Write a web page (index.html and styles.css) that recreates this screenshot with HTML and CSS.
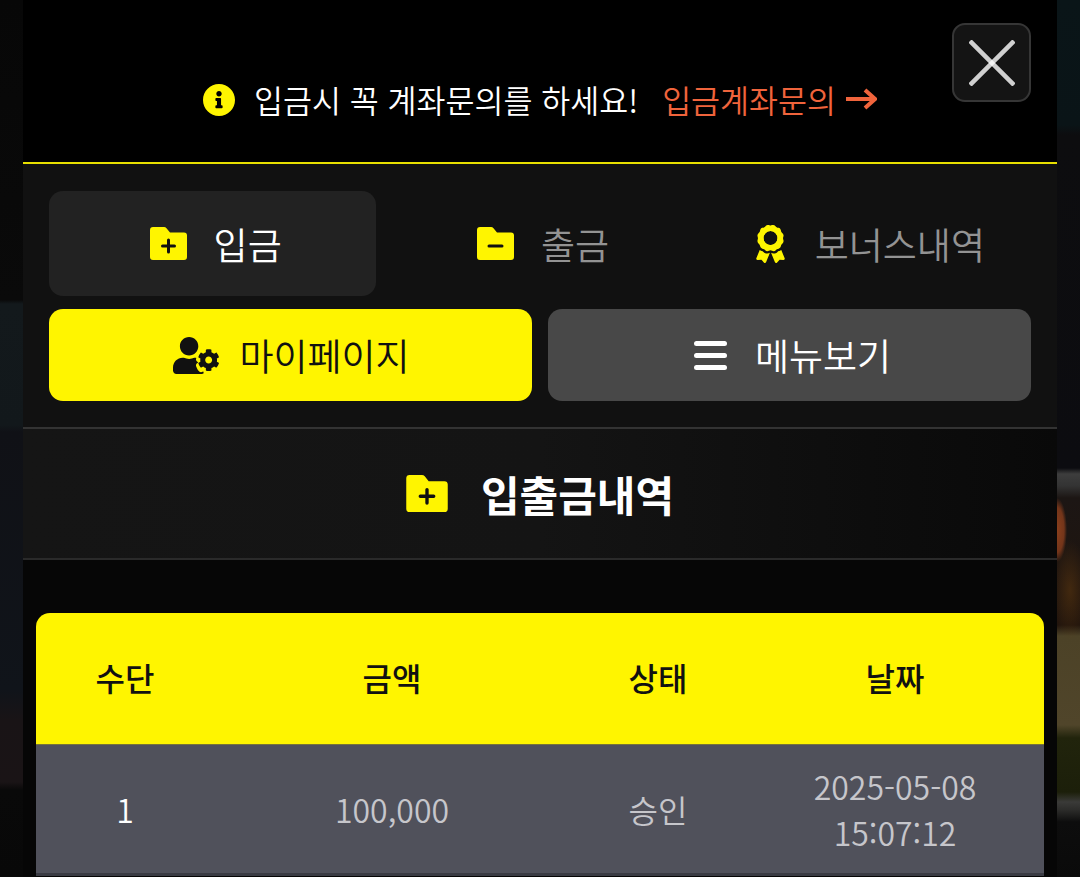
FILE: index.html
```html
<!DOCTYPE html>
<html lang="ko">
<head>
    <meta charset="UTF-8">
    <meta name="viewport" content="width=device-width, initial-scale=1.0">
    <title>입출금내역</title>
    <link rel="stylesheet" href="styles.css">
</head>
<body>
    <div class="modal">
        <button class="close-button" aria-label="닫기">
            <svg viewBox="0 0 46 46" width="46" height="46">
                <path d="M1 1 L45 45" />
                <path d="M45 1 L1 45" />
            </svg>
        </button>

        <div class="notice">
            <svg class="notice-icon" viewBox="8 8 496 496">
                <path d="M256 8C119.043 8 8 119.083 8 256c0 136.997 111.043 248 248 248s248-111.003 248-248C504 119.083 392.957 8 256 8zm0 110c23.196 0 42 18.804 42 42s-18.804 42-42 42-42-18.804-42-42 18.804-42 42-42zm56 254c0 6.627-5.373 12-12 12h-88c-6.627 0-12-5.373-12-12v-24c0-6.627 5.373-12 12-12h12v-64h-12c-6.627 0-12-5.373-12-12v-24c0-6.627 5.373-12 12-12h64c6.627 0 12 5.373 12 12v100h12c6.627 0 12 5.373 12 12v24z" />
            </svg>
            <span class="notice-text">입금시 꼭 계좌문의를 하세요!</span>
            <a class="notice-link" href="#">입금계좌문의
                <svg viewBox="0 0 32 24" width="32" height="24">
                    <path d="M1 12 H29 M20 3 L30 12 L20 21" />
                </svg>
            </a>
        </div>

        <div class="nav-panel">
            <div class="tabs">
                <a class="tab active" href="#">
                    <svg class="tab-icon" viewBox="0 0 37 33">
                        <path d="M3 0 H14 Q15.5 0 16.5 1.2 L20 5.5 H34 Q37 5.5 37 8.5 V30 Q37 33 34 33 H3 Q0 33 0 30 V3 Q0 0 3 0 Z" />
                        <path class="glyph-line" d="M12.5 19 H24.5 M18.5 13 V25" />
                    </svg>
                    입금
                </a>
                <a class="tab" href="#">
                    <svg class="tab-icon" viewBox="0 0 37 33">
                        <path d="M3 0 H14 Q15.5 0 16.5 1.2 L20 5.5 H34 Q37 5.5 37 8.5 V30 Q37 33 34 33 H3 Q0 33 0 30 V3 Q0 0 3 0 Z" />
                        <path class="glyph-line" d="M12 19 H25" />
                    </svg>
                    출금
                </a>
                <a class="tab" href="#">
                    <svg class="tab-icon award-icon" viewBox="0 0 384 512">
                        <path d="M97.12 362.63c-8.69-8.69-4.16-6.24-25.12-11.85-9.51-2.55-17.87-7.45-25.43-13.32L1.2 448.7c-4.39 10.77 3.81 22.47 15.43 22.03l52.69-2.01L105.56 507c8 8.44 22.04 5.81 26.43-4.96l52.05-127.62c-10.84 6.04-22.87 9.58-35.31 9.58-19.5 0-37.82-7.59-51.61-21.37zM382.8 448.7l-45.37-111.24c-7.56 5.88-15.92 10.77-25.43 13.32-21.07 5.64-16.45 3.18-25.12 11.85-13.79 13.78-32.12 21.37-51.62 21.37-12.44 0-24.47-3.55-35.31-9.58L252 502.04c4.39 10.77 18.44 13.4 26.43 4.96l36.25-38.28 52.69 2.01c11.62.44 19.82-11.27 15.43-22.03zM263 340c15.28-15.55 17.03-14.21 38.79-20.14 13.89-3.79 24.75-14.84 28.47-28.98 7.48-28.4 5.54-24.97 25.95-45.75 10.17-10.35 14.14-25.44 10.42-39.58-7.47-28.38-7.48-24.42 0-52.83 3.72-14.14-.25-29.23-10.42-39.58-20.41-20.78-18.47-17.36-25.95-45.75-3.72-14.14-14.58-25.19-28.47-28.98-27.88-7.61-24.52-5.62-44.95-26.41-10.17-10.35-25-14.4-38.89-10.61-27.87 7.6-23.98 7.61-51.9 0-13.89-3.79-28.72.25-38.89 10.61-20.41 20.78-17.05 18.8-44.94 26.41-13.89 3.79-24.75 14.84-28.47 28.98-7.47 28.39-5.54 24.97-25.95 45.75-10.17 10.35-14.15 25.44-10.42 39.58 7.47 28.36 7.48 24.4 0 52.82-3.72 14.14.25 29.23 10.42 39.59 20.41 20.78 18.47 17.35 25.95 45.75 3.72 14.14 14.58 25.19 28.47 28.98C104.6 325.96 106.27 325 121 340c13.23 13.47 33.84 15.88 49.74 5.82a39.676 39.676 0 0 1 42.53 0c15.89 10.06 36.5 7.65 49.73-5.82zM97.66 175.96c0-53.03 42.24-96.02 94.34-96.02s94.34 42.99 94.34 96.02-42.24 96.02-94.34 96.02-94.34-42.99-94.34-96.02z" />
                        <circle class="award-ring" cx="192" cy="176" r="108" />
                    </svg>
                    보너스내역
                </a>
            </div>

            <div class="actions">
                <a class="action-button mypage" href="#">
                    <svg class="user-icon" viewBox="0 0 640 512">
                        <path d="M610.5 341.3c2.6-14.1 2.6-28.5 0-42.6l25.8-14.9c3-1.7 4.3-5.2 3.3-8.5-6.7-21.6-18.2-41.2-33.2-57.4-2.3-2.5-6-3.1-9-1.4l-25.8 14.9c-10.9-9.3-23.4-16.5-36.9-21.3v-29.8c0-3.4-2.4-6.4-5.7-7.1-22.3-5-45-4.8-66.2 0-3.3.7-5.7 3.7-5.7 7.1v29.8c-13.5 4.8-26 12-36.9 21.3l-25.8-14.9c-2.9-1.7-6.7-1.1-9 1.4-15 16.2-26.5 35.8-33.2 57.4-1 3.3.4 6.8 3.3 8.5l25.8 14.9c-2.6 14.1-2.6 28.5 0 42.6l-25.8 14.9c-3 1.7-4.3 5.2-3.3 8.5 6.7 21.6 18.2 41.1 33.2 57.4 2.3 2.5 6 3.1 9 1.4l25.8-14.9c10.9 9.3 23.4 16.5 36.9 21.3v29.8c0 3.4 2.4 6.4 5.7 7.1 22.3 5 45 4.8 66.2 0 3.3-.7 5.7-3.7 5.7-7.1v-29.8c13.5-4.8 26-12 36.9-21.3l25.8 14.9c2.9 1.7 6.7 1.1 9-1.4 15-16.2 26.5-35.8 33.2-57.4 1-3.3-.4-6.8-3.3-8.5l-25.8-14.9zM496 368.5c-26.8 0-48.5-21.8-48.5-48.5s21.8-48.5 48.5-48.5 48.5 21.8 48.5 48.5-21.7 48.5-48.5 48.5zM224 256c70.7 0 128-57.3 128-128S294.7 0 224 0 96 57.3 96 128s57.3 128 128 128zm201.2 226.5c-2.3-1.2-4.6-2.6-6.8-3.9l-7.9 4.6c-6 3.4-12.8 5.3-19.6 5.3-10.9 0-21.4-4.6-28.9-12.6-18.3-19.8-32.3-43.9-40.2-69.6-5.5-17.7 1.9-36.4 17.9-45.7l7.9-4.6c-.1-2.6-.1-5.2 0-7.8l-7.9-4.6c-16-9.2-23.4-28-17.9-45.7.9-2.9 2.2-5.8 3.2-8.7-3.8-.3-7.5-1.2-11.4-1.2h-16.7c-22.2 10.2-46.9 16-72.9 16s-50.6-5.8-72.9-16h-16.7C60.2 288 0 348.2 0 422.4V464c0 26.5 21.5 48 48 48h352c10.1 0 19.5-3.2 27.2-8.5-1.2-3.8-2-7.7-2-11.8v-9.2z" />
                    </svg>
                    마이페이지
                </a>
                <a class="action-button menu" href="#">
                    <svg class="bars-icon" viewBox="0 0 33 29">
                        <rect x="0" y="0" width="33" height="5" rx="2.5" />
                        <rect x="0" y="12" width="33" height="5" rx="2.5" />
                        <rect x="0" y="24" width="33" height="5" rx="2.5" />
                    </svg>
                    메뉴보기
                </a>
            </div>
        </div>

        <h2 class="page-title">
            <svg class="title-icon" viewBox="0 0 37 33">
                <path d="M3 0 H14 Q15.5 0 16.5 1.2 L20 5.5 H34 Q37 5.5 37 8.5 V30 Q37 33 34 33 H3 Q0 33 0 30 V3 Q0 0 3 0 Z" />
                <path class="glyph-line" d="M12.5 19 H24.5 M18.5 13 V25" />
            </svg>
            입출금내역
        </h2>

        <div class="history">
            <table class="history-table">
                <thead>
                    <tr>
                        <th class="col-method">수단</th>
                        <th class="col-amount">금액</th>
                        <th class="col-status">상태</th>
                        <th class="col-date">날짜</th>
                    </tr>
                </thead>
                <tbody>
                    <tr>
                        <td class="row-number">1</td>
                        <td>100,000</td>
                        <td>승인</td>
                        <td>2025-05-08<br>15:07:12</td>
                    </tr>
                </tbody>
            </table>
        </div>
    </div>
</body>
</html>
```

FILE: styles.css
```css
* {
    margin: 0;
    padding: 0;
    box-sizing: border-box;
}

html,
body {
    height: 100%;
    overflow: hidden;
}

/* blurred page behind the modal, only the two side strips show */
body {
    font-family: "Noto Sans CJK KR", "Noto Sans", sans-serif;
    font-weight: 350;
    color: #fff;
    background-color: #08090b;
    background-repeat: no-repeat;
    background-image:
        radial-gradient(ellipse 10px 32px at 1057px 530px, #8a3f1c 0%, #73351a 70%, rgba(60, 30, 15, 0) 100%),
        radial-gradient(ellipse 18px 50px at 1070px 590px, rgba(100, 60, 15, 0.5) 0%, rgba(60, 30, 15, 0) 100%),
        linear-gradient(180deg, #0a1518 0, #0a1417 125px, #0d0d0f 135px, #0c0c10 468px, #3d3d3d 474px, #333 486px, #1c1614 498px, #20140d 625px, #4c4227 636px, #50452a 725px, #21240c 738px, #1c1f0a 792px, #3a3a38 802px, #2c2c2a 810px, #0d0d0d 822px, #0a0a0a 877px),
        linear-gradient(180deg, #070707 0, #0a0a0a 300px, #13191c 304px, #12181b 425px, #101116 432px, #10141a 690px, #191416 720px, #1a1416 782px, #090909 790px, #080808 877px);
    background-position: 0 0, 0 0, 1057px 0, 0 0;
    background-size: 100% 100%, 100% 100%, 23px 100%, 23px 100%;
}

a {
    text-decoration: none;
    color: inherit;
}

.modal {
    position: relative;
    width: 1034px;
    height: 100%;
    margin: 0 auto;
    background: #060606;
    overflow: hidden;
}

.close-button {
    position: absolute;
    top: 23px;
    right: 26px;
    width: 79px;
    height: 79px;
    display: flex;
    align-items: center;
    justify-content: center;
    background: #141414;
    border: 2px solid #363636;
    border-radius: 13px;
}

.close-button path {
    stroke: #fff;
    stroke-opacity: 0.8;
    stroke-width: 4.5;
    fill: none;
}

/* Notice bar */
.notice {
    height: 164px;
    display: flex;
    align-items: center;
    justify-content: center;
    padding-top: 36px;
    background: #000;
    border-bottom: 2px solid #e8df00;
    font-size: 31.5px;
    line-height: 40px;
}

.notice-icon {
    width: 32px;
    height: 32px;
    margin-top: 2px;
    margin-right: 19px;
    fill: #fff500;
}

.notice-link {
    display: flex;
    align-items: center;
    margin-left: 24px;
    color: #f0643c;
}

.notice-link svg {
    margin-left: 9px;
}

.notice-link path {
    stroke: #f0643c;
    stroke-width: 4;
    fill: none;
}

/* Tabs and buttons */
.nav-panel {
    height: 265px;
    padding: 27px 26px 0;
    background: #111;
    border-bottom: 2px solid #333;
}

.tabs {
    display: grid;
    grid-template-columns: repeat(3, 1fr);
}

.tab {
    height: 105px;
    display: flex;
    align-items: center;
    justify-content: center;
    gap: 27px;
    padding-left: 6px;
    border-radius: 14px;
    font-size: 37px;
    color: #939393;
}

.tab.active {
    background: #222;
    color: #fff;
}

.tab-icon {
    width: 37px;
    height: 33px;
    fill: #fff500;
}

.award-icon {
    width: 29px;
    height: 38px;
    margin-right: 3px;
}

.award-ring {
    fill: none;
    stroke: #fff500;
    stroke-width: 28;
}

.glyph-line {
    fill: none;
    stroke: #111;
    stroke-width: 3;
    stroke-linecap: round;
}

.actions {
    display: grid;
    grid-template-columns: 1fr 1fr;
    gap: 16px;
    margin-top: 13px;
}

.action-button {
    height: 92px;
    display: flex;
    align-items: center;
    justify-content: center;
    gap: 20px;
    border-radius: 14px;
    font-size: 37px;
}

.action-button.mypage {
    padding-left: 2px;
    background: #fff500;
    color: #111;
}

.action-button.menu {
    padding-left: 6px;
    background: #484848;
    color: #fff;
}

.user-icon {
    width: 46px;
    height: 37px;
    fill: #111;
}

.bars-icon {
    width: 33px;
    height: 29px;
    margin-right: 8px;
    fill: #fff;
}

/* Title */
.page-title {
    height: 131px;
    display: flex;
    align-items: center;
    justify-content: center;
    gap: 33px;
    background: linear-gradient(90deg, #151515 0%, #141414 50%, #090909 100%);
    border-bottom: 2px solid #2a2a2a;
    font-size: 42px;
    font-weight: 700;
}

.title-icon {
    width: 42px;
    height: 37px;
    fill: #fff500;
}

/* Table */
.history {
    padding: 53px 13px 0;
}

.history-table {
    width: 1008px;
    border-collapse: separate;
    border-spacing: 0;
    table-layout: fixed;
    font-size: 32px;
}

.history-table th {
    height: 132px;
    padding-bottom: 4px;
    background: #fff500;
    color: #111;
    font-weight: 500;
    border-bottom: 1px solid #77743a;
}

.history-table th:first-child {
    border-top-left-radius: 14px;
}

.history-table th:last-child {
    border-top-right-radius: 14px;
}

.col-method { width: 178px; }
.col-amount { width: 356px; }
.col-status { width: 176px; }
.col-date { width: 298px; }

.history-table td {
    height: 131px;
    background: #50515b;
    color: #c6c6cb;
    text-align: center;
    line-height: 46px;
    border-bottom: 3px solid #3a3b43;
}

.history-table td.row-number {
    color: #fff;
}
```
